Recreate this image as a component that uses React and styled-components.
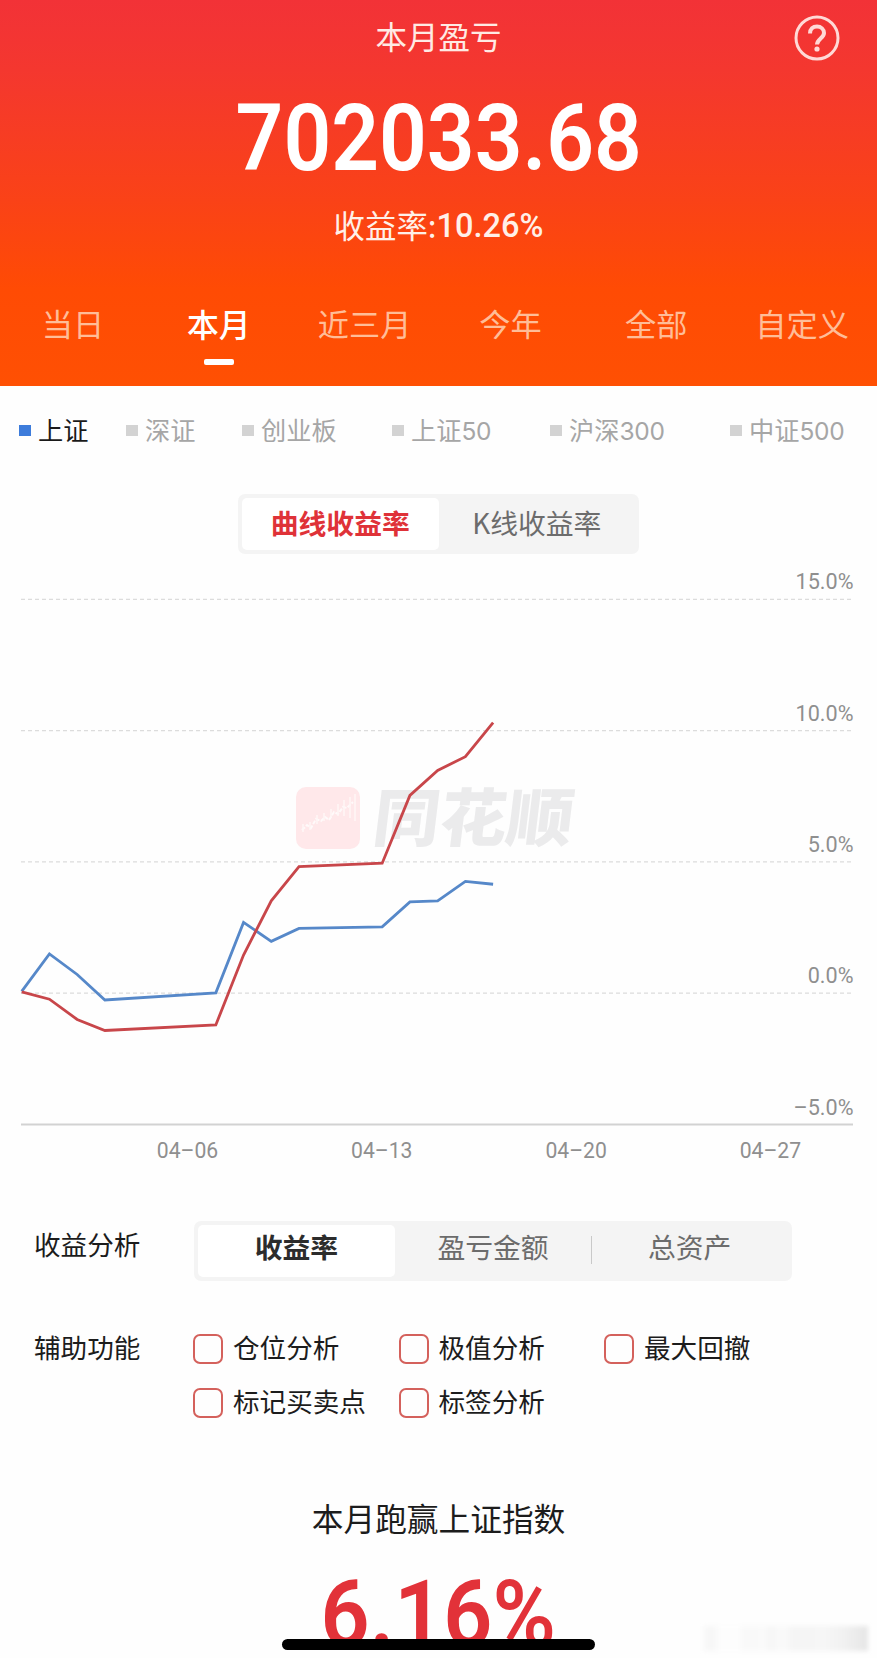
import styled, { createGlobalStyle } from "styled-components";

const GlobalStyle = createGlobalStyle`
    body {
        margin: 0;
        background: #fefefe;
        font-family: "Noto Sans CJK SC", "Noto Sans", sans-serif;
    }
    * { box-sizing: border-box; }
`;

const Page = styled.div`
    position: relative;
    width: 877px;
    height: 1658px;
    white-space: nowrap;
    color: #1c1c1c;
`;

const Header = styled.header`
    position: relative;
    height: 386px;
    display: flex;
    flex-direction: column;
    align-items: center;
    color: #fff;
    background: linear-gradient(#f23237 0%, #f4372f 18%, #fa4217 52%, #ff4b04 75%, #ff5003 100%);
`;

const Title = styled.h1`
    margin: 11px 0 0;
    font-size: 31.5px;
    line-height: 48px;
    font-weight: 400;
    color: #ffeae4;
`;

const HelpButton = styled.button`
    position: absolute;
    top: 15px;
    right: 37px;
    width: 46px;
    height: 46px;
    padding: 0;
    border: 0;
    background: none;
`;

const BigNumber = styled.div`
    font-family: Roboto, sans-serif;
    font-size: 93px;
    line-height: 110px;
    font-weight: 600;
    transform: scaleX(0.9);
`;

const Amount = styled(BigNumber)`
    margin-top: 25px;
`;

const Rate = styled.div`
    display: flex;
    margin-top: 8px;
    font-size: 31.4px;
    line-height: 46px;
    color: #fff0e8;
`;

const RateValue = styled.span`
    font-family: Roboto, sans-serif;
    font-weight: 500;
    font-size: 32.5px;
    line-height: 49px;
`;

const Tabs = styled.nav`
    width: 875px;
    margin: 49px 2px 0 0;
    display: grid;
    grid-template-columns: repeat(6, 1fr);
`;

const Tab = styled.div`
    display: flex;
    flex-direction: column;
    align-items: center;
    font-size: ${p => p.$active ? 31.8 : 31.2}px;
    line-height: 46px;
    font-weight: ${p => p.$active ? 500 : 400};
    color: ${p => p.$active ? "#fff" : "#ffbd98"};

    &::after {
        content: "";
        width: 30px;
        height: 6px;
        margin-top: 13px;
        border-radius: 2px;
        background: ${p => p.$active ? "#fff" : "transparent"};
    }
`;

const Legend = styled.div`
    display: grid;
    grid-template-columns: 107px 116px 150px 158px 180px auto;
    padding: 25px 0 0 19px;
`;

const LegendItem = styled.div`
    display: flex;
    align-items: center;
    gap: 7px;
    height: 38px;
    font-size: 25.2px;
    line-height: 36px;
    color: ${p => p.$active ? "#1a1a1a" : "#a6a6a6"};

    &::before {
        content: "";
        width: 12px;
        height: 11px;
        background: ${p => p.$active ? "#3d7cdb" : "#d3d3d3"};
    }

    span {
        height: 38px;
    }
    b {
        font-family: Inter, sans-serif;
        font-weight: 400;
        font-size: 24.5px;
        letter-spacing: -0.2px;
    }
`;

const Segmented = styled.div`
    display: flex;
    width: ${p => p.$width}px;
    height: 60px;
    padding: 4px;
    border-radius: 7px;
    background: #f4f4f4;
`;

const Segment = styled.div`
    flex: 1;
    position: relative;
    height: 52px;
    border-radius: 5px;
    text-align: center;
    font-size: 27.8px;
    line-height: ${p => p.$line || 48}px;
    font-weight: ${p => p.$active ? 700 : 400};
    color: ${p => p.$active ? p.$color : "#6c6c6c"};
    background: ${p => p.$active ? "#fff" : "none"};
`;

// thin line between two unselected segments
const DividedSegment = styled(Segment)`
    &::before {
        content: "";
        position: absolute;
        left: 0;
        top: 11px;
        width: 1px;
        height: 28px;
        background: #c9c9c9;
    }
`;

const ChartMode = styled.div`
    display: flex;
    justify-content: center;
    margin-top: 45px;
`;

const Chart = styled.svg`
    display: block;
    width: 877px;
    height: 626px;

    text {
        font-family: Roboto, sans-serif;
        font-size: 22.5px;
        fill: #8f8f8f;
    }
    .brand {
        font-family: "Noto Sans CJK SC", sans-serif;
        font-size: 63px;
        font-weight: 900;
        fill: #ebebec;
    }
`;

const Row = styled.div`
    display: flex;
    padding-left: 34px;
    margin-top: ${p => p.$top}px;
`;

const RowLabel = styled.div`
    width: 160px;
    font-size: 26.6px;
    line-height: ${p => p.$line}px;
`;

const Options = styled.div`
    display: grid;
    grid-template-columns: repeat(3, 205.5px);
    row-gap: 4px;
    margin-left: -1px;
`;

const Option = styled.label`
    display: flex;
    align-items: center;
    gap: 10px;
    height: 50px;
    font-size: 26.6px;
    line-height: 50px;
`;

const Box = styled.span`
    width: 30px;
    height: 30px;
    margin-top: 3px;
    border: 2px solid #d4615c;
    border-radius: 7px;
`;

const Summary = styled.div`
    display: flex;
    flex-direction: column;
    align-items: center;
    margin-top: 67px;
    font-size: 31.7px;
    line-height: 48px;
`;

const Excess = styled(BigNumber)`
    margin-top: 36px;
    line-height: 76px;
    transform: scaleX(0.925);
    color: #e23239;
`;

const HomeBar = styled.div`
    position: absolute;
    left: 282px;
    top: 1639px;
    width: 313px;
    height: 11px;
    border-radius: 6px;
    background: #000;
`;

const Smudge = styled.div`
    position: absolute;
    left: 704px;
    top: 1626px;
    width: 164px;
    height: 25px;
    filter: blur(2px);
    background: linear-gradient(90deg, #f7f7f7 0 10px, #fdfdfd 16px 34px, #f9f9f9 40px 54px, #fbfbfb 58px, #f6f6f6 66px, #fafafa 78px, #f5f5f5 90px 110px, #f7f7f7 116px, #f1f1f1 140px, #e6e6e6 100%);
`;

const tabs = ["当日", "本月", "近三月", "今年", "全部", "自定义"];
const indexes = [["上证"], ["深证"], ["创业板"], ["上证", "50"], ["沪深", "300"], ["中证", "500"]];
const options = ["仓位分析", "极值分析", "最大回撤", "标记买卖点", "标签分析"];
const levels = ["15.0%", "10.0%", "5.0%", "0.0%", "–5.0%"];
const dates = ["04–06", "04–13", "04–20", "04–27"];

// no trading on the days that are left out
const days = [0, 1, 2, 3, 7, 8, 9, 10, 13, 14, 15, 16, 17];
const mine = [0.06, -0.22, -0.99, -1.41, -1.2, 1.46, 3.52, 4.82, 4.95, 7.53, 8.48, 9, 10.3];
const market = [0.08, 1.5, 0.72, -0.25, 0.02, 2.7, 1.98, 2.47, 2.53, 3.48, 3.52, 4.26, 4.15];

const toPoints = values =>
    values.map((v, i) => `${21.7 + days[i] * 27.73},${439.4 - v * 26.3}`).join(" ");

function ProfitChart() {
    return (
        <Chart viewBox="0 0 877 626">
            <rect x="296" y="233" width="64" height="62" rx="10" fill="#ffe8ea" />
            <path d="M302 276l5-5 4 3 5-9 5 2 4-4 4 3 5-8 4 2 5-7 4 1 6-6" fill="none" stroke="#fffafa" strokeWidth="2" strokeDasharray="4 1.5" />
            <path d="M303 270v8M310 268v8M317 261v9M324 259v8M331 255v9M338 250v12M344 246v16M350 243v21M355 240v27" stroke="#fff6f6" strokeWidth="1.5" />
            <text className="brand" transform="translate(371 287) skewX(-7)" textLength="200" lengthAdjust="spacingAndGlyphs">同花顺</text>

            {levels.map((level, i) => (
                <g key={level}>
                    {i < 4 && <line x1="21" x2="853" y1={45.3 + i * 131.3} y2={45.3 + i * 131.3} stroke="#dcdcdc" strokeWidth="1.3" strokeDasharray="4 3" />}
                    <text transform={`translate(853.5 ${35.3 + i * 131.3}) scale(.96 1)`} textAnchor="end">{level}</text>
                </g>
            ))}
            <line x1="21" x2="853" y1="570.5" y2="570.5" stroke="#d2d2d2" strokeWidth="2" />
            {dates.map((date, i) => (
                <text key={date} transform={`translate(${187.5 + i * 194.3} 604) scale(.94 1)`} textAnchor="middle">{date}</text>
            ))}

            <polyline points={toPoints(market)} fill="none" stroke="#5688c9" strokeWidth="2.8" />
            <polyline points={toPoints(mine)} fill="none" stroke="#c8464a" strokeWidth="2.8" />
        </Chart>
    );
}

function App() {
    return (
        <Page>
            <GlobalStyle />
            <Header>
                <Title>本月盈亏</Title>
                <HelpButton aria-label="help">
                    <svg width="46" height="46" viewBox="0 0 46 46" fill="none" stroke="#ffd9d6" strokeWidth="3">
                        <circle cx="23" cy="23" r="21" />
                        <path d="M16 18.5c0-4.500 3-7 7-7s7 2.800 7 6.500c0 5-7 6-7 11.500" strokeWidth="4" />
                        <circle cx="23" cy="34" r="2.6" fill="#ffd9d6" stroke="none" />
                    </svg>
                </HelpButton>
                <Amount>702033.68</Amount>
                <Rate>收益率:<RateValue>10.26%</RateValue></Rate>
                <Tabs>
                    {tabs.map(t => <Tab key={t} $active={t === "本月"}>{t}</Tab>)}
                </Tabs>
            </Header>

            <Legend>
                {indexes.map(([name, size], i) => (
                    <LegendItem key={i} $active={i === 0}>
                        <span>{name}{size && <b>{size}</b>}</span>
                    </LegendItem>
                ))}
            </Legend>

            <ChartMode>
                <Segmented $width={401}>
                    <Segment $active $color="#df3238">曲线收益率</Segment>
                    <Segment>K线收益率</Segment>
                </Segmented>
            </ChartMode>

            <ProfitChart />

            <Row $top={41}>
                <RowLabel $line={46}>收益分析</RowLabel>
                <Segmented $width={598}>
                    <Segment $line={43} $active $color="#2c2c2c">收益率</Segment>
                    <Segment $line={43}>盈亏金额</Segment>
                    <DividedSegment $line={43}>总资产</DividedSegment>
                </Segmented>
            </Row>

            <Row $top={41}>
                <RowLabel $line={50}>辅助功能</RowLabel>
                <Options>
                    {options.map(o => <Option key={o}><Box />{o}</Option>)}
                </Options>
            </Row>

            <Summary>
                本月跑赢上证指数
                <Excess>6.16%</Excess>
            </Summary>

            <HomeBar />
            <Smudge />
        </Page>
    );
}

export default App;
